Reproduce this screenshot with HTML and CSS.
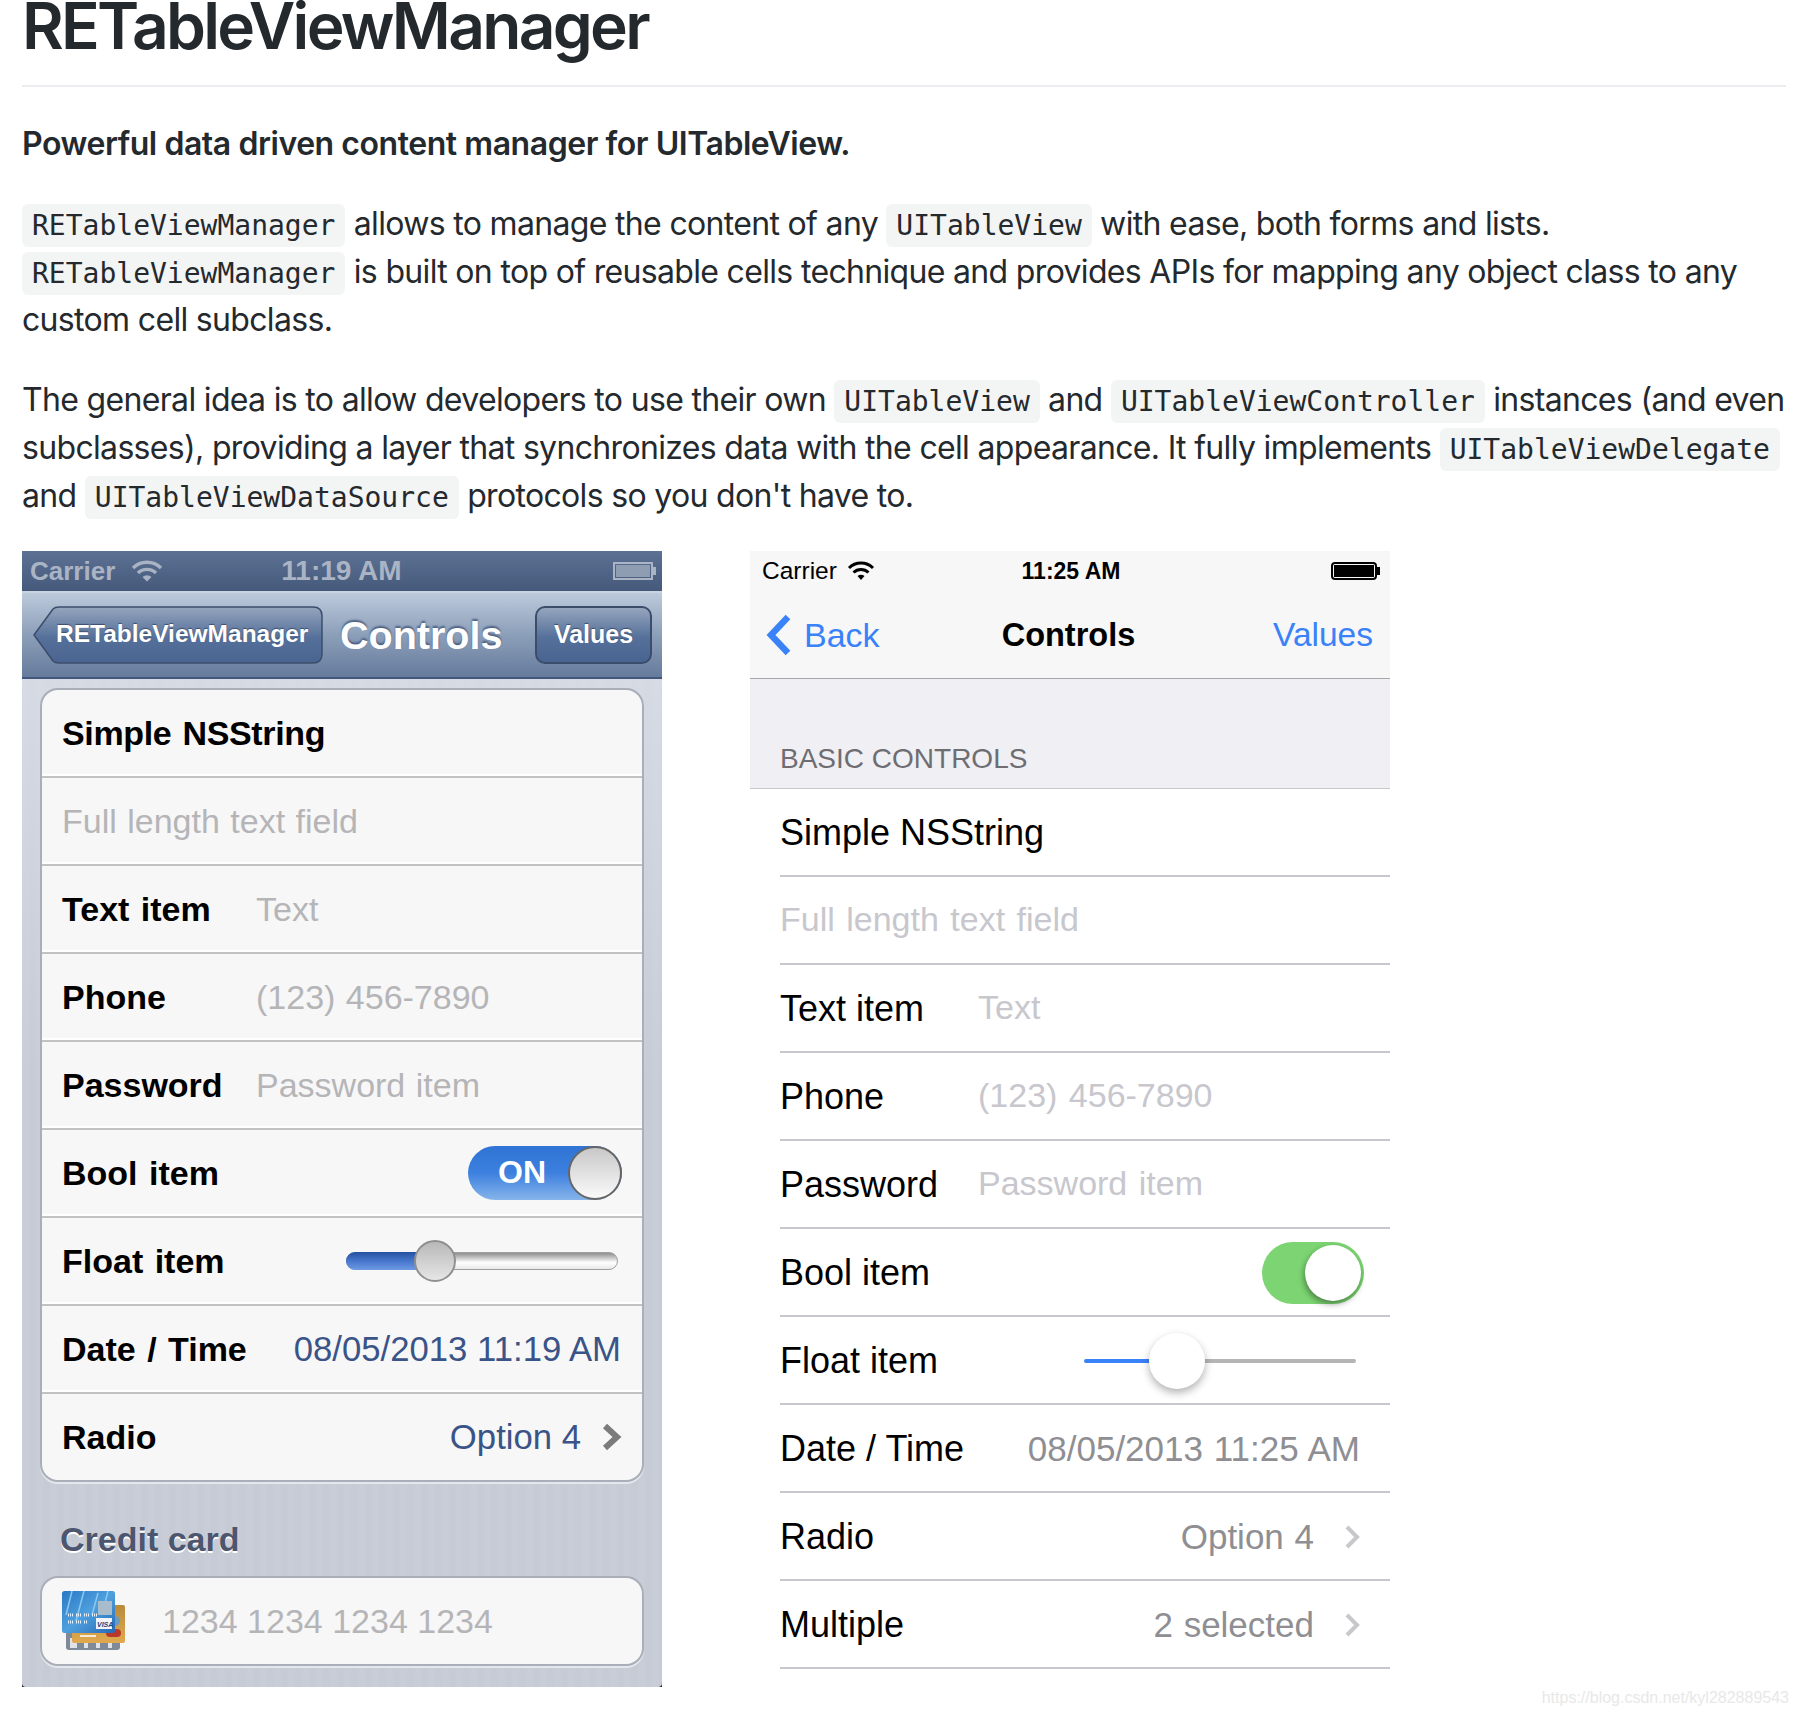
FILE: index.html
```html
<!DOCTYPE html>
<html lang="en">

<head>
    <meta charset="utf-8">
    <title>RETableViewManager</title>
    <link rel="stylesheet" href="styles.css">
</head>

<body>
    <div class="readme">
        <h1>RETableViewManager</h1>
        <p><strong>Powerful data driven content manager for UITableView.</strong></p>
        <p><code>RETableViewManager</code> allows to manage the content of any <code>UITableView</code> with ease, both forms and lists.<br>
            <code>RETableViewManager</code> is built on top of reusable cells technique and provides APIs for mapping any object class to any<br>
            custom cell subclass.</p>
        <p>The general idea is to allow developers to use their own <code>UITableView</code> and <code>UITableViewController</code> instances (and even<br>
            subclasses), providing a layer that synchronizes data with the cell appearance. It fully implements <code>UITableViewDelegate</code><br>
            and <code>UITableViewDataSource</code> protocols so you don't have to.</p>

        <div class="shots">
            <!-- iOS 6 -->
            <div class="phone old">
                <div class="status">
                    <div class="carrier">Carrier
                        <svg class="wifi" viewBox="0 0 32 22" width="32" height="22">
                            <path d="M2 8 A20 20 0 0 1 30 8" fill="none" stroke="#a9b3c3" stroke-width="3.4" />
                            <path d="M7 13 A13 13 0 0 1 25 13" fill="none" stroke="#a9b3c3" stroke-width="3.4" />
                            <path d="M11.500 17 L16 21.500 L20.500 17 A7 7 0 0 0 11.500 17 Z" fill="#a9b3c3" />
                        </svg>
                    </div>
                    <div class="time">11:19 AM</div>
                    <div class="battery"><span></span></div>
                </div>
                <div class="nav">
                    <div class="back-btn">
                        <svg viewBox="0 0 290 58" width="290" height="58">
                            <defs>
                                <linearGradient id="btn" x1="0" y1="0" x2="0" y2="1">
                                    <stop offset="0" stop-color="#95a5bd" />
                                    <stop offset="0.55" stop-color="#55709a" />
                                    <stop offset="1" stop-color="#496490" />
                                </linearGradient>
                            </defs>
                            <path d="M1 29 L20 3 Q22 1 26 1 H280 Q289 1 289 10 V48 Q289 57 280 57 H26 Q22 57 20 55 Z" fill="url(#btn)" stroke="#3c4d6c" stroke-width="1.500" />
                        </svg>
                        <span>RETableViewManager</span>
                    </div>
                    <div class="title">Controls</div>
                    <div class="values-btn">Values</div>
                </div>
                <div class="stripes">
                    <div class="group">
                        <div class="row"><span class="label tight">Simple NSString</span></div>
                        <div class="row"><span class="hint">Full length text field</span></div>
                        <div class="row"><span class="label fixed">Text item</span><span class="hint">Text</span></div>
                        <div class="row"><span class="label fixed">Phone</span><span class="hint">(123) 456-7890</span></div>
                        <div class="row"><span class="label fixed">Password</span><span class="hint">Password item</span></div>
                        <div class="row spread">
                            <span class="label">Bool item</span>
                            <div class="switch"><span class="on">ON</span><span class="knob"></span></div>
                        </div>
                        <div class="row spread">
                            <span class="label">Float item</span>
                            <div class="slider"><span class="knob"></span></div>
                        </div>
                        <div class="row spread"><span class="label">Date / Time</span><span class="value">08/05/2013 11:19 AM</span></div>
                        <div class="row spread">
                            <span class="label">Radio</span>
                            <div class="detail"><span class="value">Option 4</span>
                                <svg viewBox="0 0 22 28" width="22" height="28"><path d="M4 3 L16 14 L4 25" fill="none" stroke="#7b7b7b" stroke-width="6" /></svg>
                            </div>
                        </div>
                    </div>
                    <div class="group-title">Credit card</div>
                    <div class="group">
                        <div class="row card-row">
                            <svg class="card" viewBox="0 0 64 60" width="64" height="60">
                                <defs>
                                    <linearGradient id="gold" x1="0" y1="0" x2="0" y2="1">
                                        <stop offset="0" stop-color="#b98a3c" />
                                        <stop offset="1" stop-color="#e0a94f" />
                                    </linearGradient>
                                    <linearGradient id="blue" x1="0" y1="0" x2="1" y2="1">
                                        <stop offset="0" stop-color="#2b78c6" />
                                        <stop offset="0.5" stop-color="#4fa0de" />
                                        <stop offset="1" stop-color="#2469b5" />
                                    </linearGradient>
                                </defs>
                                <rect x="4" y="36" width="54" height="23" rx="3" fill="#7e8a98" />
                                <rect x="8" y="47" width="7" height="10" fill="#dfe3e8" />
                                <rect x="22" y="47" width="4" height="10" fill="#dfe3e8" />
                                <rect x="34" y="47" width="4" height="10" fill="#dfe3e8" />
                                <rect x="46" y="47" width="4" height="10" fill="#dfe3e8" />
                                <rect x="10" y="14" width="53" height="38" rx="2" fill="url(#gold)" />
                                <circle cx="53" cy="30" r="5" fill="#6a9ac0" />
                                <rect x="44" y="38" width="15" height="8" rx="4" fill="#b8382c" />
                                <rect x="18" y="44" width="16" height="2" fill="#f6ecd6" />
                                <rect x="0" y="0" width="53" height="42" rx="2.500" fill="url(#blue)" />
                                <path d="M10 0 L4 24 M22 0 L14 30 M36 2 L30 24 M46 0 L42 16" stroke="#8cc8ef" stroke-width="1.500" fill="none" />
                                <rect x="36" y="10" width="14" height="14" fill="#a9bccb" />
                                <path d="M6 24 h6 M14 24 h6 M22 24 h6 M30 24 h6 M6 31 h6 M14 31 h6 M22 31 h4" stroke="#e9f2fa" stroke-width="3" stroke-dasharray="1 1" fill="none" />
                                <rect x="34" y="27" width="16" height="11" fill="#f2f4f7" />
                                <text x="35" y="36" class="visa">VISA</text>
                            </svg>
                            <span class="hint">1234 1234 1234 1234</span>
                        </div>
                    </div>
                </div>
            </div>

            <!-- iOS 7 -->
            <div class="phone flat">
                <div class="bar">
                    <div class="status">
                        <div class="carrier">Carrier
                            <svg class="wifi" viewBox="0 0 28 20" width="28" height="20">
                                <path d="M2 7 A17 17 0 0 1 26 7" fill="none" stroke="#000" stroke-width="3" />
                                <path d="M6.500 11.500 A11 11 0 0 1 21.500 11.500" fill="none" stroke="#000" stroke-width="3" />
                                <path d="M10.500 15 L14 19 L17.500 15 A6 6 0 0 0 10.500 15 Z" fill="#000" />
                            </svg>
                        </div>
                        <div class="time">11:25 AM</div>
                        <div class="battery"><span></span></div>
                    </div>
                    <div class="nav">
                        <div class="back">
                            <svg viewBox="0 0 28 42" width="28" height="42"><path d="M24 3 L7 21 L24 39" fill="none" stroke="#3a82f7" stroke-width="6.500" /></svg>
                            Back
                        </div>
                        <div class="title">Controls</div>
                        <div class="back values">Values</div>
                    </div>
                </div>
                <div class="section-head">BASIC CONTROLS</div>
                <div class="list">
                    <div class="row"><span class="label">Simple NSString</span></div>
                    <div class="row"><span class="hint">Full length text field</span></div>
                    <div class="row"><span class="label fixed">Text item</span><span class="hint">Text</span></div>
                    <div class="row"><span class="label fixed">Phone</span><span class="hint">(123) 456-7890</span></div>
                    <div class="row"><span class="label fixed">Password</span><span class="hint">Password item</span></div>
                    <div class="row spread">
                        <span class="label">Bool item</span>
                        <div class="switch"><span class="knob"></span></div>
                    </div>
                    <div class="row spread">
                        <span class="label">Float item</span>
                        <div class="slider"><span class="knob"></span></div>
                    </div>
                    <div class="row spread"><span class="label">Date / Time</span><span class="value">08/05/2013 11:25 AM</span></div>
                    <div class="row spread">
                        <span class="label">Radio</span>
                        <div class="detail"><span class="value">Option 4</span>
                            <svg viewBox="0 0 18 26" width="18" height="26"><path d="M3 3 L13 13 L3 23" fill="none" stroke="#c7c7cc" stroke-width="4" /></svg>
                        </div>
                    </div>
                    <div class="row spread">
                        <span class="label">Multiple</span>
                        <div class="detail"><span class="value">2 selected</span>
                            <svg viewBox="0 0 18 26" width="18" height="26"><path d="M3 3 L13 13 L3 23" fill="none" stroke="#c7c7cc" stroke-width="4" /></svg>
                        </div>
                    </div>
                </div>
            </div>
        </div>
    </div>
    <div class="watermark">https://blog.csdn.net/kyl282889543</div>
</body>

</html>
```

FILE: styles.css
```css
body {
    margin: 0;
    background-color: white;
    height: 1714px;
    overflow: hidden;
    position: relative;
    font-family: Inter, sans-serif;
    color: #24292e;
}

.readme {
    width: 1764px;
    margin-left: 22px;
    font-size: 32px;
    line-height: 48px;
    letter-spacing: -0.67px;
}

h1 {
    margin: -14px 0 33px 0;
    padding-bottom: 19px;
    border-bottom: 2px solid #eaecef;
    font-size: 64px;
    line-height: 80px;
    font-weight: 600;
    letter-spacing: -2.7px;
}

p {
    margin: 0 0 32px 0;
    white-space: nowrap;
}

p:last-of-type {
    margin-bottom: 31px;
}

strong {
    font-weight: 600;
    letter-spacing: -0.45px;
}

code {
    font-family: "DejaVu Sans Mono", monospace;
    font-size: 28px;
    line-height: 1;
    letter-spacing: 0;
    padding: 5px 10px;
    background-color: #f3f4f4;
    border-radius: 6px;
}

.shots {
    display: flex;
    gap: 88px;
    letter-spacing: 0;
}

.phone {
    width: 640px;
    height: 1136px;
    font-family: "Liberation Sans", sans-serif;
    line-height: normal;
}

.row {
    display: flex;
    align-items: center;
    height: 88px;
    box-sizing: border-box;
    white-space: nowrap;
}

.spread {
    justify-content: space-between;
}

.detail {
    display: flex;
    align-items: center;
}

/* iOS 6 */

.old {
    background-color: #222;
}

.old .status {
    display: grid;
    grid-template-columns: 1fr auto 1fr;
    align-items: center;
    height: 40px;
    padding: 0 9px 0 8px;
    background: linear-gradient(#5c7193, #45597b);
    color: #aab4c4;
    font-size: 28px;
    font-weight: 700;
}

.old .carrier {
    display: flex;
    align-items: center;
    gap: 16px;
    font-size: 26px;
}

.battery {
    justify-self: end;
    box-sizing: border-box;
    position: relative;
}

.old .battery {
    width: 40px;
    height: 18px;
    border: 2px solid #aab4c4;
    padding: 1px;
}

.old .battery span {
    display: block;
    height: 100%;
    background-color: #8f9db3;
}

.old .battery::after {
    content: "";
    position: absolute;
    right: -5px;
    top: 3px;
    width: 3px;
    height: 8px;
    background-color: #aab4c4;
}

.old .nav {
    display: flex;
    align-items: center;
    height: 88px;
    box-sizing: border-box;
    padding: 0 10px 0 11px;
    background: linear-gradient(#bccadb, #8c9fb9 50%, #667b9c);
    border-top: 2px solid #c9d3e1;
    border-bottom: 2px solid #42557a;
}

.back-btn {
    position: relative;
    width: 290px;
    height: 58px;
}

.back-btn svg {
    position: absolute;
    left: 0;
    top: 0;
}

.back-btn span {
    position: absolute;
    left: 23px;
    top: 14px;
    font-size: 24.5px;
    font-weight: 700;
    color: white;
    text-shadow: 0 -1px 1px #3c4d6c;
}

.old .title {
    margin-left: 17px;
    font-size: 39.5px;
    font-weight: 700;
    color: white;
    text-shadow: 0 -2px 2px #4c5f80;
}

.values-btn {
    margin-left: auto;
    width: 117px;
    height: 58px;
    box-sizing: border-box;
    border: 2px solid #3c4d6c;
    border-radius: 10px;
    background: linear-gradient(#95a5bd, #55709a 55%, #496490);
    color: white;
    font-size: 25px;
    font-weight: 700;
    line-height: 52px;
    text-align: center;
    text-shadow: 0 -1px 1px #3c4d6c;
}

.stripes {
    height: 1008px;
    padding: 9px 19px 0 19px;
    box-sizing: border-box;
    border-radius: 0 0 4px 4px;
    background:
        linear-gradient(rgba(226, 230, 238, 0.55), rgba(226, 230, 238, 0) 40%),
        repeating-linear-gradient(90deg, #c8cdd8 0 7px, #c6cbd6 7px 14px);
}

.group {
    border: 2px solid #a9aeb9;
    border-radius: 18px;
    background-color: #f7f7f7;
    box-shadow: 0 2px 0 #e4e7ec;
    overflow: hidden;
    margin: 0 -1px;
}

.old .row {
    padding: 0 21px 0 20px;
    border-bottom: 2px solid #c2c2c2;
    box-shadow: inset 0 -2px 0 white;
    font-size: 34px;
    word-spacing: 2px;
}

.old .row:last-child {
    height: 86px;
    border-bottom: 0;
    box-shadow: none;
}

.old .label {
    font-weight: 700;
    color: black;
}

.old .tight {
    letter-spacing: -0.35px;
}

.old .fixed {
    width: 194px;
}

.hint {
    color: #b5b5b8;
}

.old .hint {
    font-size: 34px;
    word-spacing: 1px;
}

.old .value {
    font-size: 34.7px;
    word-spacing: 0;
    color: #3a5488;
}

.old .detail svg {
    margin: 0 -2px 0 20px;
}

.old .switch {
    position: relative;
    width: 154px;
    height: 54px;
    margin-right: -1px;
    border-radius: 27px;
    background: linear-gradient(#2f73d4, #3d80df 50%, #86b4ea);
}

.old .on {
    position: absolute;
    left: 30px;
    top: 8px;
    font-size: 32px;
    font-weight: 700;
    color: white;
}

.old .switch .knob {
    position: absolute;
    right: 0;
    top: 0;
    width: 54px;
    height: 54px;
    box-sizing: border-box;
    border: 2px solid #666;
    border-radius: 50%;
    background: linear-gradient(#c8c8c8, #fafafa);
}

.old .slider {
    position: relative;
    width: 272px;
    height: 18px;
    margin-right: 3px;
    border: 1px solid #a0a0a0;
    border-radius: 9px;
    box-sizing: border-box;
    background: linear-gradient(#8e8e8e, #fff 60%, #e8e8e8);
}

.old .slider::before {
    content: "";
    position: absolute;
    left: -1px;
    top: -1px;
    width: 80px;
    height: 18px;
    border-radius: 9px 0 0 9px;
    background: linear-gradient(#24509f, #4a7ad0 55%, #6d9ae2);
}

.old .slider .knob {
    position: absolute;
    left: 67px;
    top: -13px;
    width: 42px;
    height: 42px;
    box-sizing: border-box;
    border: 2px solid #8f8f8f;
    border-radius: 50%;
    background: linear-gradient(#b8b8b8, #e6e6e6);
}

.group-title {
    margin: 33px 0 13px 19px;
    font-size: 34px;
    font-weight: 700;
    line-height: 48px;
    color: #4c566e;
    text-shadow: 0 2px 0 white;
}

.old .card-row {
    height: 84px;
    gap: 36px;
    word-spacing: 0;
}

.old .card-row .hint {
    word-spacing: 0;
}

.visa {
    font-family: "Liberation Sans", sans-serif;
    font-size: 7px;
    font-weight: 700;
    font-style: italic;
    fill: #23407e;
}

/* iOS 7 */

.flat .bar {
    height: 128px;
    box-sizing: border-box;
    background-color: #f7f7f8;
    border-bottom: 1px solid #a8a8aa;
}

.flat .status {
    display: grid;
    grid-template-columns: 1fr auto 1fr;
    align-items: center;
    height: 40px;
    padding: 0 10px 0 12px;
    font-size: 24.5px;
    color: black;
}

.flat .carrier {
    display: flex;
    align-items: center;
    gap: 10px;
}

.flat .time {
    font-size: 23px;
    font-weight: 700;
}

.flat .battery {
    width: 46px;
    height: 18px;
    margin-right: 3px;
    border: 2px solid black;
    border-radius: 4px;
    padding: 1px;
}

.flat .battery span {
    display: block;
    height: 100%;
    background-color: black;
}

.flat .battery::after {
    content: "";
    position: absolute;
    right: -5px;
    top: 3px;
    width: 3px;
    height: 8px;
    background-color: black;
}

.flat .nav {
    display: grid;
    grid-template-columns: 1fr auto 1fr;
    align-items: center;
    height: 87px;
    padding: 1px 17px 0 14px;
    box-sizing: border-box;
}

.back {
    display: flex;
    align-items: center;
    gap: 12px;
    font-size: 34px;
    color: #3a82f7;
}

.values {
    justify-content: flex-end;
    font-size: 33.5px;
}

.flat .title {
    font-size: 32.5px;
    font-weight: 700;
    color: black;
}

.section-head {
    height: 110px;
    box-sizing: border-box;
    padding: 64px 0 0 30px;
    background-color: #efeff4;
    border-bottom: 1px solid #c8c7cc;
    font-size: 28px;
    line-height: 32px;
    color: #6d6d72;
}

.list {
    padding-left: 30px;
}

.flat .row {
    border-bottom: 2px solid #c8c7cc;
    padding: 2px 30px 0 0;
    font-size: 36px;
    color: black;
}

.flat .fixed {
    width: 198px;
}

.flat .hint {
    font-size: 34px;
    word-spacing: 2px;
    margin-bottom: 3px;
    color: #c7c7cd;
}

.flat .value {
    font-size: 35px;
    word-spacing: 1px;
    color: #8e8e93;
}

.flat .detail svg {
    margin: 0 -2px 0 30px;
}

.flat .switch {
    width: 102px;
    height: 62px;
    margin-right: -4px;
    border-radius: 31px;
    background-color: #7cd572;
    position: relative;
}

.flat .switch .knob {
    position: absolute;
    right: 3px;
    top: 3px;
    width: 56px;
    height: 56px;
    border-radius: 50%;
    background-color: white;
    box-shadow: -1px 3px 6px rgba(0, 0, 0, 0.4);
}

.flat .slider {
    position: relative;
    width: 272px;
    height: 4px;
    background: linear-gradient(90deg, #3a82f7 0 70px, #b5b5b5 70px);
    border-radius: 2px;
    margin-right: 4px;
}

.flat .slider .knob {
    position: absolute;
    left: 65px;
    top: -26px;
    width: 56px;
    height: 56px;
    border-radius: 50%;
    background-color: white;
    box-shadow: 0 4px 8px rgba(0, 0, 0, 0.3);
}

.watermark {
    position: absolute;
    right: 9px;
    top: 1689px;
    font-family: "Liberation Sans", sans-serif;
    font-size: 16px;
    color: #e8e8e8;
}
```
